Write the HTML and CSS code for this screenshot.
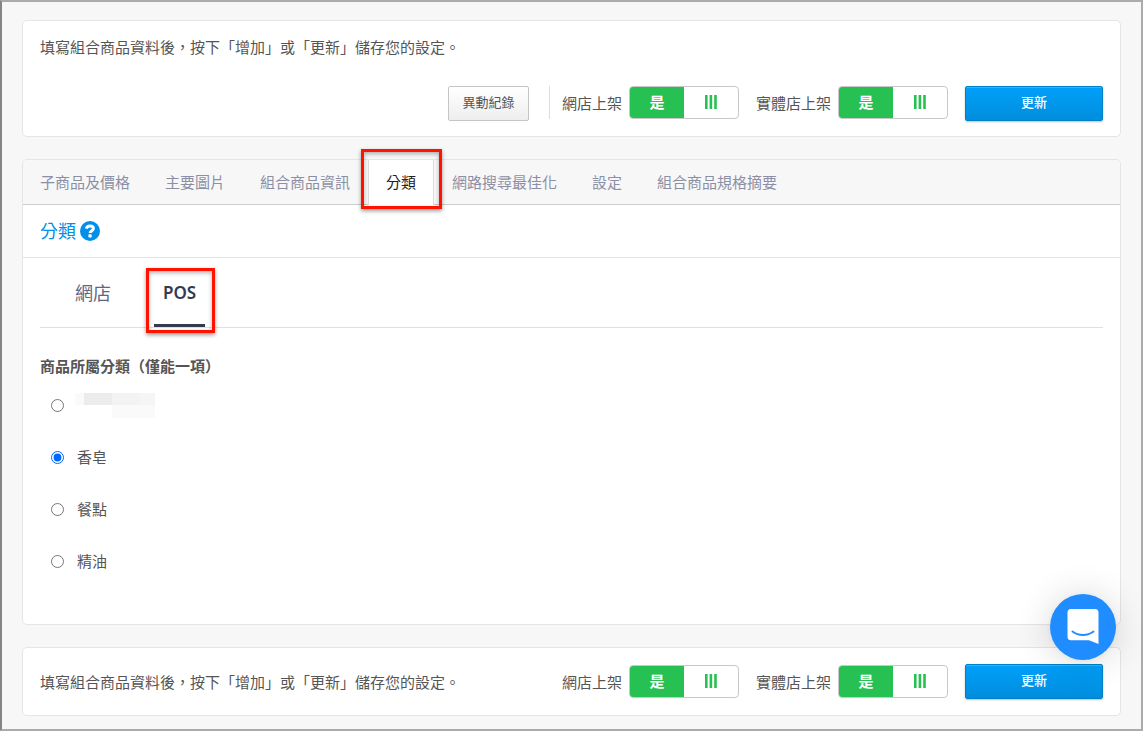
FILE: index.html
```html
<!DOCTYPE html>
<html lang="zh-Hant">
<head>
    <meta charset="UTF-8">
    <meta name="viewport" content="width=device-width, initial-scale=1.0">
    <title>組合商品</title>
    <link rel="stylesheet" href="styles.css">
</head>
<body>
    <header class="card action-card">
        <p class="hint">填寫組合商品資料後，按下「增加」或「更新」儲存您的設定。</p>
        <div class="actions">
            <button class="btn btn-default" type="button">異動紀錄</button>
            <span class="divider"></span>
            <label class="switch-field">
                網店上架
                <input class="switch-input" type="checkbox" checked>
                <span class="switch">
                    <span class="switch-on">是</span>
                    <span class="switch-handle">
                        <svg width="12" height="14" viewBox="0 0 12 14"><path d="M0 0h2.6v14H0zM4.6 0h2.6v14H4.6zM9.2 0h2.6v14H9.2z" fill="#27c153"/></svg>
                    </span>
                </span>
            </label>
            <label class="switch-field">
                實體店上架
                <input class="switch-input" type="checkbox" checked>
                <span class="switch">
                    <span class="switch-on">是</span>
                    <span class="switch-handle">
                        <svg width="12" height="14" viewBox="0 0 12 14"><path d="M0 0h2.6v14H0zM4.6 0h2.6v14H4.6zM9.2 0h2.6v14H9.2z" fill="#27c153"/></svg>
                    </span>
                </span>
            </label>
            <button class="btn btn-primary" type="button">更新</button>
        </div>
    </header>

    <main class="card panel">
        <nav class="tabs">
            <a class="tab" href="#">子商品及價格</a>
            <a class="tab" href="#">主要圖片</a>
            <a class="tab" href="#">組合商品資訊</a>
            <a class="tab active" href="#">分類</a>
            <a class="tab" href="#">網路搜尋最佳化</a>
            <a class="tab" href="#">設定</a>
            <a class="tab" href="#">組合商品規格摘要</a>
        </nav>

        <h2 class="section-title">
            分類
            <svg width="20" height="20" viewBox="0 0 20 20">
                <circle cx="10" cy="10" r="10" fill="#0090e9"/>
                <path d="M6.300 7.600C6.800 5.500 8.100 4.900 10 4.900c2 0 3.400 1 3.400 2.600 0 2.300-3.300 2.200-3.300 4.600" fill="none" stroke="#fff" stroke-width="3"/>
                <rect x="8.400" y="13.200" width="3.300" height="3.200" rx=".7" fill="#fff"/>
            </svg>
        </h2>

        <div class="panel-body">
            <nav class="subtabs">
                <a class="subtab" href="#">網店</a>
                <a class="subtab active" href="#">POS</a>
            </nav>

            <fieldset class="categories">
                <legend>商品所屬分類（僅能一項）</legend>
                <label class="category">
                    <input type="radio" name="category">
                    <span class="masked"></span>
                </label>
                <label class="category">
                    <input type="radio" name="category" checked>
                    香皂
                </label>
                <label class="category">
                    <input type="radio" name="category">
                    餐點
                </label>
                <label class="category">
                    <input type="radio" name="category">
                    精油
                </label>
            </fieldset>
        </div>
    </main>

    <footer class="card action-card action-card-inline">
        <p class="hint">填寫組合商品資料後，按下「增加」或「更新」儲存您的設定。</p>
        <div class="actions">
            <label class="switch-field">
                網店上架
                <input class="switch-input" type="checkbox" checked>
                <span class="switch">
                    <span class="switch-on">是</span>
                    <span class="switch-handle">
                        <svg width="12" height="14" viewBox="0 0 12 14"><path d="M0 0h2.6v14H0zM4.6 0h2.6v14H4.6zM9.2 0h2.6v14H9.2z" fill="#27c153"/></svg>
                    </span>
                </span>
            </label>
            <label class="switch-field">
                實體店上架
                <input class="switch-input" type="checkbox" checked>
                <span class="switch">
                    <span class="switch-on">是</span>
                    <span class="switch-handle">
                        <svg width="12" height="14" viewBox="0 0 12 14"><path d="M0 0h2.6v14H0zM4.6 0h2.6v14H4.6zM9.2 0h2.6v14H9.2z" fill="#27c153"/></svg>
                    </span>
                </span>
            </label>
            <button class="btn btn-primary" type="button">更新</button>
        </div>
    </footer>

    <button class="chat-btn" type="button" aria-label="Chat">
        <svg width="32" height="36" viewBox="0 0 32 36">
            <path d="M4 0h24a3.500 3.500 0 0 1 3.500 3.500V35l-9.500-3.700H4A3.500 3.500 0 0 1 .5 27.800V3.500A3.500 3.500 0 0 1 4 0z" fill="#fff"/>
            <path d="M5.500 22.500c6 4.600 15 4.600 21 0" fill="none" stroke="#1f8cff" stroke-width="2" stroke-linecap="round"/>
        </svg>
    </button>
</body>
</html>
```
FILE: styles.css
```css
* {
    margin: 0;
    padding: 0;
    box-sizing: border-box;
}

body {
    display: flex;
    flex-direction: column;
    gap: 22px;
    min-height: 100vh;
    padding: 18px 20px 13px;
    border: 2px solid #ababab;
    border-left-color: #858585;
    background: #f7f7f7;
    color: #555;
    font-family: 'Noto Sans', 'Noto Sans CJK TC', sans-serif;
    font-size: 15px;
    line-height: 22px;
}

a {
    color: inherit;
    text-decoration: none;
}

.card {
    background: #fff;
    border: 1px solid #e5e5e5;
    border-radius: 5px;
}

/* Save bars */
.action-card {
    display: flex;
    flex-direction: column;
    gap: 28px;
    padding: 15px 17px;
}

.action-card-inline {
    flex-direction: row;
    align-items: center;
    justify-content: space-between;
    padding: 16px 17px;
}

.actions {
    display: flex;
    align-items: flex-start;
    justify-content: flex-end;
    gap: 17px;
}

.action-card-inline .actions {
    align-items: center;
}

.btn {
    height: 35px;
    padding-bottom: 4px;
    border-radius: 2px;
    font-family: inherit;
    font-size: 13px;
    cursor: pointer;
}

.btn-default {
    width: 81px;
    margin-right: 3px;
    border: 1px solid #c5c5c5;
    background: linear-gradient(#fff, #eee);
    color: #555;
}

.btn-primary {
    width: 138px;
    border: 1px solid #0080c8;
    background: linear-gradient(#009ffa, #008edd);
    box-shadow: inset 0 1px 0 #35b1fa, 0 1px 2px rgba(0, 0, 0, 0.25);
    color: #fff;
    font-weight: 500;
}

.divider {
    width: 1px;
    height: 33px;
    margin-right: -5px;
    background: #ddd;
}

.switch-field {
    display: flex;
    align-items: center;
    gap: 7px;
    position: relative;
    line-height: 20px;
    cursor: pointer;
}

.switch-input {
    position: absolute;
    right: 0;
    width: 110px;
    height: 33px;
    opacity: 0;
}

.switch {
    display: flex;
    width: 110px;
    height: 33px;
    border: 1px solid #c8c8c8;
    border-radius: 4px;
    background: #fff;
    overflow: hidden;
}

.switch-on,
.switch-handle {
    display: flex;
    flex: 1;
    align-items: center;
    justify-content: center;
    padding-bottom: 2px;
}

.switch-on {
    background: #27c153;
    color: #fff;
    font-weight: bold;
}

/* Main tabs */
.tabs {
    display: flex;
    gap: 1px;
    height: 45px;
    border-bottom: 1px solid #ccc;
    border-radius: 5px 5px 0 0;
    background: #f7f7f7;
    color: #8b8fa5;
}

.tab {
    position: relative;
    padding: 11px 17px;
}

.tab.active {
    height: 45px;
    padding: 11px 18px;
    background: #fff;
    box-shadow: inset 1px 0 0 #ddd, inset -1px 0 0 #ddd;
    color: #222;
}

.tab.active::after,
.subtab.active::after {
    content: '';
    position: absolute;
    border: 3px solid #ff1200;
    box-shadow: 0 2px 4px rgba(0, 0, 0, 0.4), inset 0 2px 4px rgba(0, 0, 0, 0.3);
}

.tab.active::after {
    inset: -11px -8px -4px -7px;
}

.section-title {
    display: flex;
    align-items: center;
    gap: 4px;
    height: 53px;
    padding: 0 17px;
    border-bottom: 1px solid #e5e5e5;
    color: #0090e9;
    font-size: 18px;
    font-weight: normal;
}

.panel-body {
    padding: 0 17px 37px;
}

/* Sales channel tabs */
.subtabs {
    display: flex;
    gap: 34px;
    padding-left: 26px;
    border-bottom: 1px solid #e0e0e0;
    color: #5f6685;
    font-size: 18px;
    line-height: 24px;
}

.subtab {
    position: relative;
    padding: 23px 9px 19px;
    border-bottom: 3px solid transparent;
}

.subtab.active {
    border-bottom-color: #343a50;
    color: #343a50;
    font-size: 17px;
    font-weight: 600;
}

.subtab.active::after {
    inset: 10px -10px -9px -8px;
}

.categories {
    margin-top: 27px;
    border: none;
}

.categories legend {
    margin-bottom: 2px;
    font-weight: bold;
}

.category {
    display: flex;
    align-items: center;
    gap: 13px;
    height: 52px;
    padding-left: 11px;
}

.category input {
    width: 13px;
    height: 13px;
    accent-color: #0067ff;
}

.masked {
    width: 80px;
    height: 25px;
    margin-left: -2px;
    background:
        linear-gradient(90deg, #fafafa 9px, #ececec 9px 37px, #f3f3f3 37px 65px, #f5f5f5 65px) 0 0 / 80px 12px no-repeat,
        linear-gradient(#fafafa, #fafafa) 37px 12px / 43px 13px no-repeat;
}

/* Messenger launcher */
.chat-btn {
    display: flex;
    align-items: center;
    justify-content: center;
    position: fixed;
    right: 27px;
    bottom: 71px;
    width: 66px;
    height: 66px;
    border: none;
    border-radius: 50%;
    background: #1f8cff;
    box-shadow: 0 1px 6px rgba(0, 0, 0, 0.06), 0 2px 36px rgba(0, 0, 0, 0.16);
    cursor: pointer;
}
```
